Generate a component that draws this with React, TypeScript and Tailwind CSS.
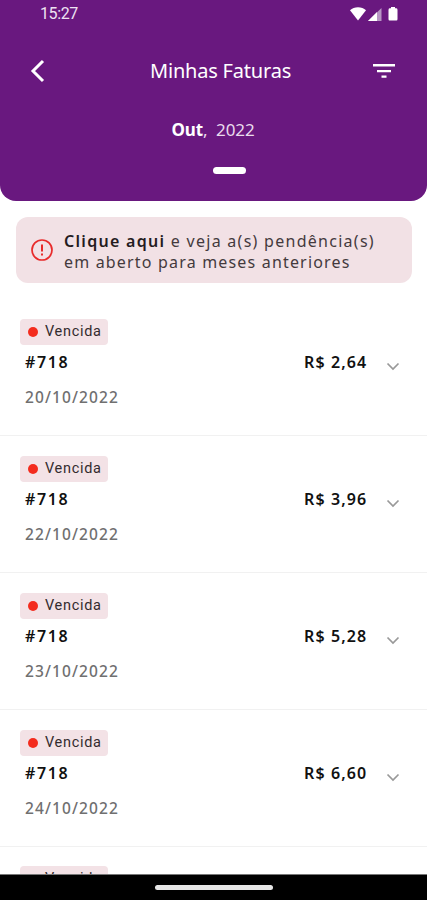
const invoices = [
  { id: '#718', value: 'R$ 2,64', date: '20/10/2022' },
  { id: '#718', value: 'R$ 3,96', date: '22/10/2022' },
  { id: '#718', value: 'R$ 5,28', date: '23/10/2022' },
  { id: '#718', value: 'R$ 6,60', date: '24/10/2022' },
];

function StatusBadge() {
  return (
    <span className="flex h-[26px] w-[88px] items-center rounded-[4px] bg-[#f3e2e6] pl-2 font-['Roboto',sans-serif] text-[14.5px] leading-none tracking-[0.7px] text-[#332b2e]">
      <span className="mr-[7px] size-[10px] shrink-0 rounded-full bg-[#f32c1e]" />
      <span className="leading-[16px]">Vencida</span>
    </span>
  );
}

function StatusBar() {
  return (
    <div className="flex h-[28px] items-center justify-between pl-10 pr-[28px]">
      <span className="font-['Roboto',sans-serif] text-[16px] leading-none tracking-[-0.4px] text-[#eee2f2]">15:27</span>
      <svg width="50" height="16" viewBox="0 0 50 16" fill="#fff">
        <path d="M1 4.2C5 .2 13 .2 17 4.2L9 14.5z" />
        <path d="M19 15 32.5 2v13z" fill="#b795c4" />
        <path d="M19 15 28 6v9z" />
        <path d="M40.500 2.300h1.500V1h4v1.300h1.500Q48.500 2.300 48.500 4v9q0 1.500-1 1.500h-7Q39.500 14.500 39.500 13V4q0-1.700 1-1.700z" />
      </svg>
    </div>
  );
}

function InvoiceRow({ invoice }: { invoice: (typeof invoices)[number] }) {
  return (
    <li className="h-[137px] shrink-0 border-b border-[#f1f1f1] pl-5 pt-5">
      <StatusBadge />
      <div className="flex h-[33px] items-center pl-[5px] pr-[27px] text-[16px] font-semibold leading-none text-[#111]">
        <span className="tracking-[1.6px]">{invoice.id}</span>
        <span className="ml-auto w-[63px] whitespace-nowrap tracking-[1.1px]">{invoice.value}</span>
        <svg className="ml-[19px] mt-[9px]" width="14" height="9" viewBox="0 0 14 9" fill="none" stroke="#999" strokeWidth="1.7">
          <path d="m1.500 1.500 5.500 5.500 5.500-5.500" />
        </svg>
      </div>
      <p className="pl-[5px] pt-[11px] text-[15.5px] font-medium leading-[16px] tracking-[1.1px] text-[#707070]">{invoice.date}</p>
    </li>
  );
}

export default function App() {
  return (
    <div className="flex h-[900px] w-full flex-col overflow-hidden bg-white font-['Noto_Sans',sans-serif]">
      <header className="h-[201px] shrink-0 rounded-b-[16px] bg-[#69187f] text-white">
        <StatusBar />
        <div className="mt-[28px] flex h-[30px] items-center pl-[30px] pr-[32px]">
          <svg width="16" height="24" viewBox="0 0 16 24" fill="none" stroke="#fff" strokeWidth="3">
            <path d="M13 2 3 12l10 10" />
          </svg>
          <h1 className="ml-[104px] whitespace-nowrap text-[20px] leading-none tracking-[-0.2px]">Minhas Faturas</h1>
          <svg className="ml-auto" width="22" height="16" viewBox="0 0 22 16" fill="#fff">
            <path d="M0 1h22v2.500H0zM4 7h14v2.300H4zM8.500 12.500h5v2.300h-5z" />
          </svg>
        </div>
        <p className="mt-[33px] whitespace-pre pr-px text-center text-[17px] leading-[22px] tracking-[-0.1px] text-[#e9dbed]">
          <b className="text-white">Out</b>,  2022
        </p>
        <div className="ml-[213px] mt-[26px] h-[7px] w-[33px] rounded-full bg-white" />
      </header>
      <button className="ml-4 mr-[15px] mt-4 flex h-[66px] shrink-0 items-center rounded-[12px] bg-[#f2e1e5] pl-[14px] text-left text-[16px] leading-[21px] text-[#443a3d]">
        <svg className="mr-[10px] shrink-0" width="24" height="24" viewBox="0 0 24 24" fill="none" stroke="#e82b2b">
          <circle cx="12" cy="12" r="10" strokeWidth="1.700" />
          <path d="M12 6.500v7M12 15.500v2" strokeWidth="2" />
        </svg>
        <span className="pt-[3px]">
          <span className="block whitespace-nowrap tracking-[1.27px]"><b className="font-semibold tracking-[1.3px] text-[#251c1f]">Clique aqui</b> e veja a(s) pendência(s)</span>
          <span className="block whitespace-nowrap tracking-[1.18px]">em aberto para meses anteriores</span>
        </span>
      </button>
      <ul className="mt-4 min-h-0 flex-1 overflow-hidden">
        {invoices.map((invoice) => (
          <InvoiceRow key={invoice.date} invoice={invoice} />
        ))}
        <li className="pl-5 pt-[19px]"><StatusBadge /></li>
      </ul>
      <footer className="flex h-[26px] shrink-0 justify-center border-t border-[#777] bg-black pt-[10px]">
        <div className="h-[5px] w-[118px] rounded-full bg-[#e6e6e6]" />
      </footer>
    </div>
  );
}
